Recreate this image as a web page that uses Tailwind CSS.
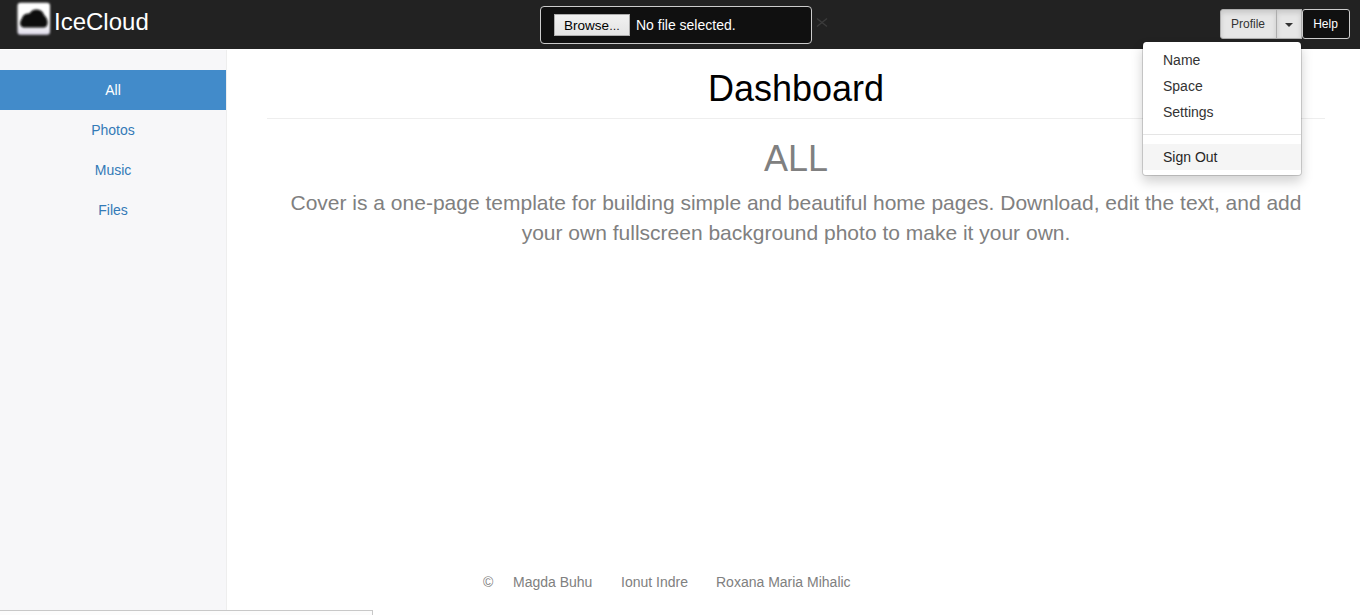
<!DOCTYPE html>
<html lang="en">
<head>
<meta charset="utf-8">
<title>IceCloud</title>
<script src="https://cdn.jsdelivr.net/npm/@tailwindcss/browser@4"></script>
</head>
<body class="relative flex h-[615px] w-[1360px] flex-col overflow-hidden bg-white font-['Liberation_Sans',Arial,sans-serif] text-sm leading-5 text-[#333]">
<header class="flex h-[49px] shrink-0 items-start bg-[#222]">
  <a class="flex w-[540px] items-start pl-[14px] text-2xl leading-[44px] text-white">
    <svg class="h-[42px] w-10 shrink-0" viewBox="0 0 40 42">
      <defs>
        <linearGradient id="tile" x1="0" y1="0" x2="0" y2="1"><stop offset="0.65" stop-color="#fff"/><stop offset="1" stop-color="#dcd8e8"/></linearGradient>
        <filter id="glow" x="-20%" y="-20%" width="140%" height="140%"><feGaussianBlur stdDeviation="1.3"/></filter>
        <filter id="soft"><feGaussianBlur stdDeviation="0.8"/></filter>
      </defs>
      <rect x="3.500" y="2.700" width="32.500" height="32" rx="3" fill="url(#tile)" filter="url(#glow)"/>
      <path d="M10.500 27.500C7 27.500 5.800 25 6.200 22.500C6.500 20 8 18.800 8.500 17C9.500 14.500 12.500 13 15.500 13.500C17 11 19.500 9.300 23 9.500C26.500 9.700 29.500 12 30 15C32.500 17 33.800 20 33.600 23C33.400 26 32 27.500 29.500 27.500Z" fill="#080808" filter="url(#soft)"/>
    </svg>
    <span>IceCloud</span>
  </a>
  <div class="mt-[6px] flex h-[38px] w-[272px] items-start rounded-[4px] border border-[#ccc] bg-[#101010] pt-[7px] pl-[13px] text-white">
    <button class="h-[22px] w-[76px] border border-[#adadad] bg-linear-to-b from-[#f1f1f1] to-[#e4e4e4] text-center text-[13.500px] leading-[21px] text-black">Browse<span class="text-[11px]">…</span></button>
    <span class="ml-[6px] leading-[22px]">No file selected.</span>
  </div>
  <svg class="mt-[17px] ml-[4px] h-[11px] w-[12px]" viewBox="0 0 12 11" fill="none" stroke="#3c3c3c" stroke-width="1.300"><path d="M1 1.500l10 8M11 1.500l-10 8"/></svg>
  <nav class="mt-[9px] mr-[10px] ml-auto flex h-[30px] text-xs leading-7">
    <button class="w-[57px] rounded-l-[3px] border border-[#adadad] bg-[#e6e6e6] pr-px text-center shadow-[inset_0_3px_5px_rgba(0,0,0,0.125)]">Profile</button>
    <button class="-ml-px flex w-[26px] items-center justify-center border border-[#adadad] bg-[#e6e6e6] pt-0.5 shadow-[inset_0_3px_5px_rgba(0,0,0,0.125)]"><span class="border-x-4 border-t-4 border-x-transparent border-t-[#333]"></span></button>
    <button class="w-12 rounded-[3px] border border-[#ccc] bg-[#101010] pr-px text-center text-white">Help</button>
  </nav>
</header>
<div class="flex min-h-0 grow">
  <aside class="mt-px w-[227px] shrink-0 border-r border-[#eee] bg-[#f7f7f9] pt-5 text-center leading-10 text-[#337ab7]">
    <a class="block h-10 bg-[#428bca] text-white">All</a>
    <a class="block h-10">Photos</a>
    <a class="block h-10">Music</a>
    <a class="block h-10">Files</a>
  </aside>
  <main class="flex grow flex-col pr-[35px] pl-10 text-center text-[#808080]">
    <h1 class="h-[70px] border-b border-[#eee] pt-5 text-[36px] leading-[40px] text-black">Dashboard</h1>
    <h2 class="mt-5 text-[36px] leading-10">ALL</h2>
    <p class="mt-[9px] px-5 text-[21px] leading-[30px]">Cover is a one-page template for building simple and beautiful home pages. Download, edit the text, and add your own fullscreen background photo to make it your own.</p>
    <footer class="mt-auto mb-[23px] flex pl-[216px]">
      <span class="w-[30px] text-left">©</span>
      <span class="w-[108px] text-left">Magda Buhu</span>
      <span class="w-[95px] text-left">Ionut Indre</span>
      <span>Roxana Maria Mihalic</span>
    </footer>
  </main>
</div>
<ul class="absolute top-[42px] left-[1142px] h-[134px] w-[160px] rounded-[4px] border border-t-0 border-black/15 bg-white bg-clip-padding pt-[5px] shadow-[0_6px_12px_rgba(0,0,0,0.175)]">
  <li class="h-[26px] pl-5 leading-[26px]">Name</li>
  <li class="h-[26px] pl-5 leading-[26px]">Space</li>
  <li class="h-[26px] pl-5 leading-[26px]">Settings</li>
  <li class="mt-[9px] mb-[9px] h-px bg-[#e5e5e5]"></li>
  <li class="h-[26px] bg-[#f5f5f5] pl-5 leading-[26px] text-[#262626]">Sign Out</li>
</ul>
<div class="absolute bottom-0 left-0 h-[5px] w-[373px] border-t border-r border-[#c8c8c8] bg-[#fcfcfc]"></div>
</body>
</html>
